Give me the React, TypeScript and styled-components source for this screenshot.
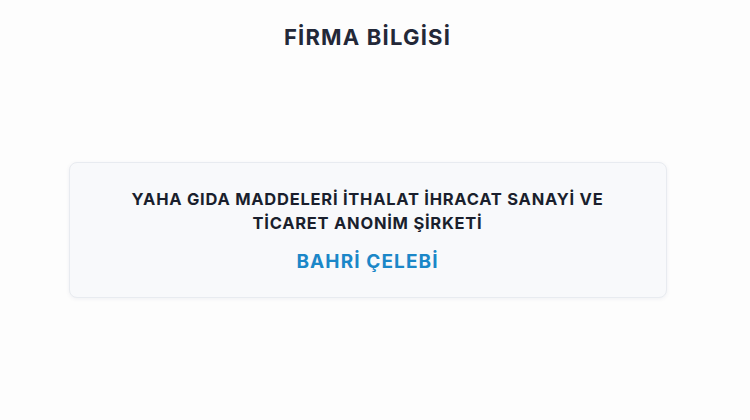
import styled, { createGlobalStyle } from 'styled-components';

const GlobalStyle = createGlobalStyle`
  html, body {
    margin: 0;
    padding: 0;
    background: #fdfdfd;
  }
  body {
    font-family: Inter, "Noto Sans", sans-serif;
  }
`;

const company = {
  title: 'FİRMA BİLGİSİ',
  name: 'YAHA GIDA MADDELERİ İTHALAT İHRACAT SANAYİ VE TİCARET ANONİM ŞİRKETİ',
  contact: 'BAHRİ ÇELEBİ'
};

const App = () => {
  return (
    <>
      <GlobalStyle />
      <Page>
        <Title>{company.title}</Title>
        <Card>
          <CompanyName>{company.name}</CompanyName>
          <ContactName>{company.contact}</ContactName>
        </Card>
      </Page>
    </>
  );
};

export default App;

const Page = styled.div`
  width: 735px;
  height: 420px;
  box-sizing: border-box;
  display: flex;
  flex-direction: column;
  align-items: center;
  padding-top: 22px;
`;

const Title = styled.h1`
  margin: 0;
  font-size: 22px;
  font-weight: 700;
  line-height: 30px;
  color: #232838;
  letter-spacing: 1.2px;
`;

const Card = styled.div`
  margin-top: 110px;
  width: 598px;
  box-sizing: border-box;
  padding: 24px 20px 22px;
  display: flex;
  flex-direction: column;
  align-items: center;
  gap: 14px;
  background: #f8f9fb;
  border: 1px solid #e8ebf0;
  border-radius: 8px;
  box-shadow: 0 1px 4px rgba(20, 40, 80, 0.06);
`;

const CompanyName = styled.div`
  max-width: 500px;
  text-align: center;
  font-size: 16.5px;
  font-weight: 700;
  line-height: 24px;
  letter-spacing: 0.75px;
  color: #1a1f2d;
`;

const ContactName = styled.div`
  font-size: 19px;
  font-weight: 700;
  line-height: 26px;
  letter-spacing: 1.1px;
  color: #1b87c8;
`;
